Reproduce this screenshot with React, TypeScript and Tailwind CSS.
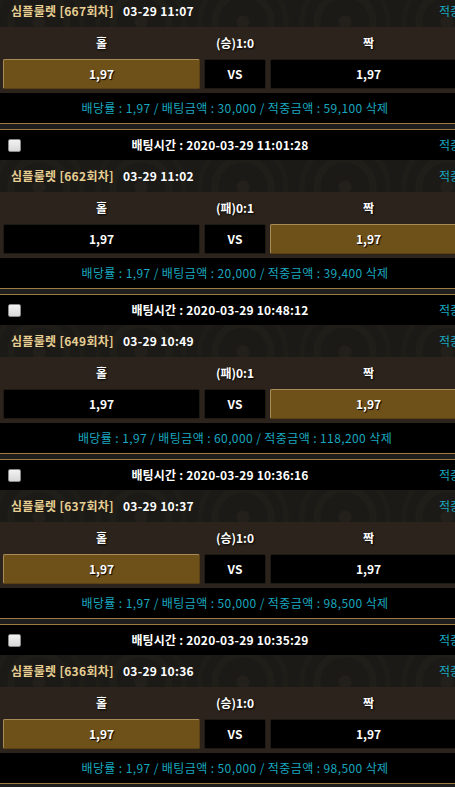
import React from "react";

type Card = {
  time: string | null;
  round: number;
  date: string;
  mid: string;
  pick: "홀" | "짝";
  amount: string;
  win: string;
};

const cards: Card[] = [
  { time: null, round: 667, date: "03-29 11:07", mid: "(승)1:0", pick: "홀", amount: "30,000", win: "59,100" },
  { time: "2020-03-29 11:01:28", round: 662, date: "03-29 11:02", mid: "(패)0:1", pick: "짝", amount: "20,000", win: "39,400" },
  { time: "2020-03-29 10:48:12", round: 649, date: "03-29 10:49", mid: "(패)0:1", pick: "짝", amount: "60,000", win: "118,200" },
  { time: "2020-03-29 10:36:16", round: 637, date: "03-29 10:37", mid: "(승)1:0", pick: "홀", amount: "50,000", win: "98,500" },
  { time: "2020-03-29 10:35:29", round: 636, date: "03-29 10:36", mid: "(승)1:0", pick: "홀", amount: "50,000", win: "98,500" },
];

function Btn({ active, children }: { active?: boolean; children: React.ReactNode }) {
  return (
    <div
      className={
        active
          ? "h-[30px] flex items-center justify-center rounded-[2px] bg-[#6e5119] border border-[#5a4216] border-t-[#a88c58] border-l-[#a88c58] text-white font-bold [text-shadow:1px_1px_1px_#000]"
          : "h-[30px] flex items-center justify-center rounded-[2px] bg-black border border-[#1d1914] text-white font-bold [text-shadow:1px_1px_1px_#000]"
      }
    >
      {children}
    </div>
  );
}

function CardView({ c, first }: { c: Card; first: boolean }) {
  return (
    <div className={first ? "-mt-[5px]" : ""}>
      {c.time && (
        <div className="grid grid-cols-[30px_1fr_60px] h-[30px] items-center bg-black">
          <div className="pl-[8px] flex items-center">
            <span className="block w-[13px] h-[13px] rounded-[2px] border border-[#8a8a8a] bg-[linear-gradient(#f2f2f2,#d8d8d8)]" />
          </div>
          <div className="text-center text-white font-bold tracking-[0.2px]">배팅시간 : {c.time}</div>
          <div className="text-right pr-[9px] text-[#19a7bf]">적중</div>
        </div>
      )}
      <div className="h-[32px] flex items-center justify-between pl-[11px] pr-[9px] bg-[#1b1a17] bg-[radial-gradient(circle,#23201b_0px,#23201b_6px,transparent_7px,transparent_24px,#201e19_25px,#201e19_31px,transparent_32px,transparent_40px,#1f1d18_41px,#1f1d18_45px,transparent_46px)] bg-[length:102px_70px] bg-[position:-12px_-8px]">
        <div className="flex items-center">
          <span className="text-[#e7cf93] font-bold tracking-[0.3px]">심플룰렛 [{c.round}회차]</span>
          <span className="ml-[9px] text-white font-bold tracking-[0.3px]">{c.date}</span>
        </div>
        <span className="text-[#19a7bf]">적중</span>
      </div>
      <div className="bg-[#2c241c] px-[3px] pb-[4px]">
        <div className="grid grid-cols-[1fr_62px_1fr] gap-x-[4px]">
          <div className="h-[32px] flex items-center justify-center text-white font-bold [text-shadow:1px_1px_2px_#000]">홀</div>
          <div className="h-[32px] flex items-center justify-center text-white font-bold [text-shadow:1px_1px_2px_#000]">{c.mid}</div>
          <div className="h-[32px] flex items-center justify-center text-white font-bold [text-shadow:1px_1px_2px_#000]">짝</div>
          <Btn active={c.pick === "홀"}>1,97</Btn>
          <Btn>VS</Btn>
          <Btn active={c.pick === "짝"}>1,97</Btn>
        </div>
      </div>
      <div className="h-[30px] flex items-center justify-center bg-black text-[#19a7bf] tracking-[0.4px]">
        배당률 : 1,97 / 배팅금액 : {c.amount} / 적중금액 : {c.win} 삭제
      </div>
      <div className="h-[7px] border-y border-[#9d7c40] bg-[#1e1e1e]" />
    </div>
  );
}

export default function App() {
  return (
    <div
      className="w-[455px] h-[787px] overflow-hidden bg-black text-[12px] leading-none"
      style={{ fontFamily: '"Noto Sans CJK KR", "Noto Sans", sans-serif' }}
    >
      <div className="w-[470px]">
        {cards.map((c, i) => (
          <CardView key={i} c={c} first={i === 0} />
        ))}
      </div>
    </div>
  );
}
